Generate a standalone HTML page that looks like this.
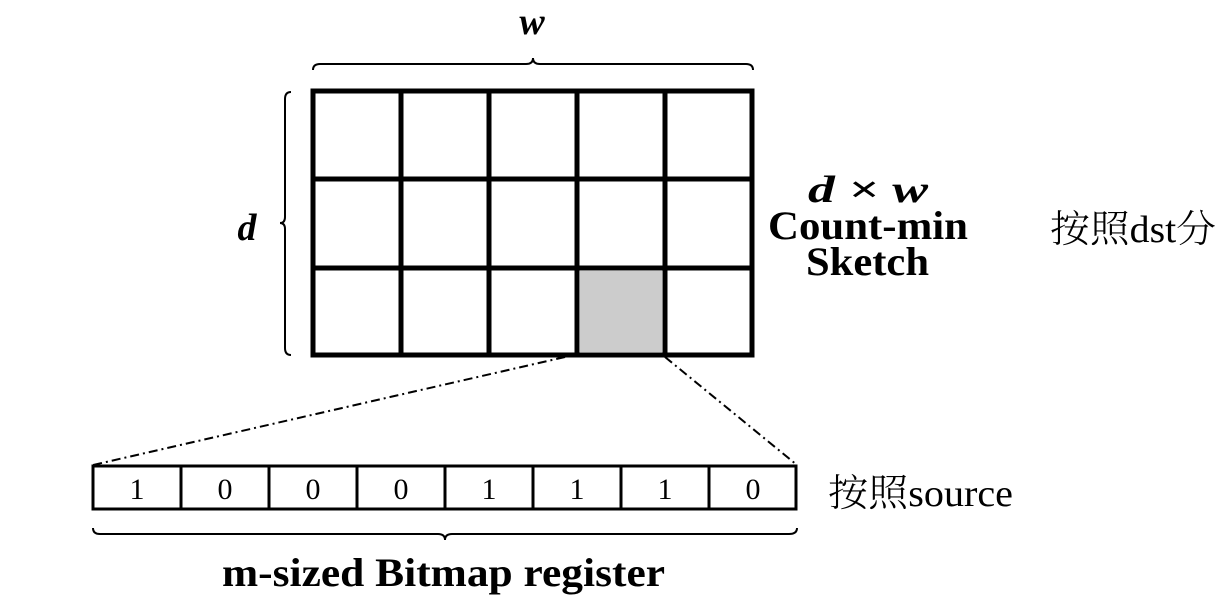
<!DOCTYPE html>
<html><head><meta charset="utf-8"><style>
html,body{margin:0;padding:0;background:#fff;width:1218px;height:598px;overflow:hidden}
svg{display:block}
.b{font-family:"Liberation Serif","Noto Serif CJK SC",serif;font-weight:bold}
.i{font-family:"Liberation Serif",serif;font-weight:bold;font-style:italic}
.c{font-family:"Liberation Serif","Noto Serif CJK SC",serif;font-weight:300}
</style></head><body>
<svg width="1218" height="598" viewBox="0 0 1218 598" xmlns="http://www.w3.org/2000/svg">
<rect x="580" y="271" width="82" height="81" fill="#cccccc"/>
<g stroke="#000" stroke-width="5" fill="none">
<rect x="313" y="91" width="439" height="264"/>
<line x1="401" y1="91" x2="401" y2="355"/>
<line x1="489" y1="91" x2="489" y2="355"/>
<line x1="577" y1="91" x2="577" y2="355"/>
<line x1="665" y1="91" x2="665" y2="355"/>
<line x1="313" y1="179" x2="752" y2="179"/>
<line x1="313" y1="268" x2="752" y2="268"/>
</g>
<g stroke="#000" stroke-width="3" fill="none">
<rect x="93" y="466" width="703" height="43"/>
<line x1="181" y1="466" x2="181" y2="509"/>
<line x1="269" y1="466" x2="269" y2="509"/>
<line x1="357" y1="466" x2="357" y2="509"/>
<line x1="445" y1="466" x2="445" y2="509"/>
<line x1="533" y1="466" x2="533" y2="509"/>
<line x1="621" y1="466" x2="621" y2="509"/>
<line x1="709" y1="466" x2="709" y2="509"/>
</g>
<g stroke="#000" stroke-width="2" fill="none" stroke-dasharray="9,4,2,4">
<line x1="565" y1="357" x2="93" y2="465"/>
<line x1="665" y1="357" x2="797" y2="465"/>
</g>
<g stroke="#000" stroke-width="2" fill="none">
<path d="M313,70 Q313,64 320,64 L526,64 Q533,64 533,58 Q533,64 540,64 L746,64 Q753,64 753,70"/>
<path d="M291,92 Q285,92 285,99 L285,217 Q285,223 280,223 Q285,223 285,229 L285,348 Q285,355 291,355"/>
<path d="M93,528 Q93,534 100,534 L438,534 Q445,534 445,540 Q445,534 452,534 L789,534 Q797,534 797,528"/>
</g>
<g font-family="Liberation Serif,serif" font-size="30" text-anchor="middle">
<text x="137" y="499">1</text><text x="225" y="499">0</text><text x="313" y="499">0</text><text x="401" y="499">0</text>
<text x="489" y="499">1</text><text x="577" y="499">1</text><text x="665" y="499">1</text><text x="753" y="499">0</text>
</g>
<text class="i" x="532" y="34" font-size="38" text-anchor="middle">w</text>
<text class="i" x="247" y="240" font-size="38" text-anchor="middle">d</text>
<text class="i" x="808" y="202" font-size="38" textLength="120" lengthAdjust="spacingAndGlyphs">d × w</text>
<text class="b" x="768" y="239" font-size="40" textLength="200" lengthAdjust="spacingAndGlyphs">Count-min</text>
<text class="b" x="806" y="275" font-size="40" textLength="123" lengthAdjust="spacingAndGlyphs">Sketch</text>
<text class="c" x="1050" y="242" font-size="38" textLength="166" lengthAdjust="spacingAndGlyphs">按照dst分</text>
<text class="c" x="828" y="506" font-size="38" textLength="185" lengthAdjust="spacingAndGlyphs">按照source</text>
<text class="b" x="222" y="586" font-size="40" textLength="443" lengthAdjust="spacingAndGlyphs">m-sized Bitmap register</text>
</svg>
</body></html>
